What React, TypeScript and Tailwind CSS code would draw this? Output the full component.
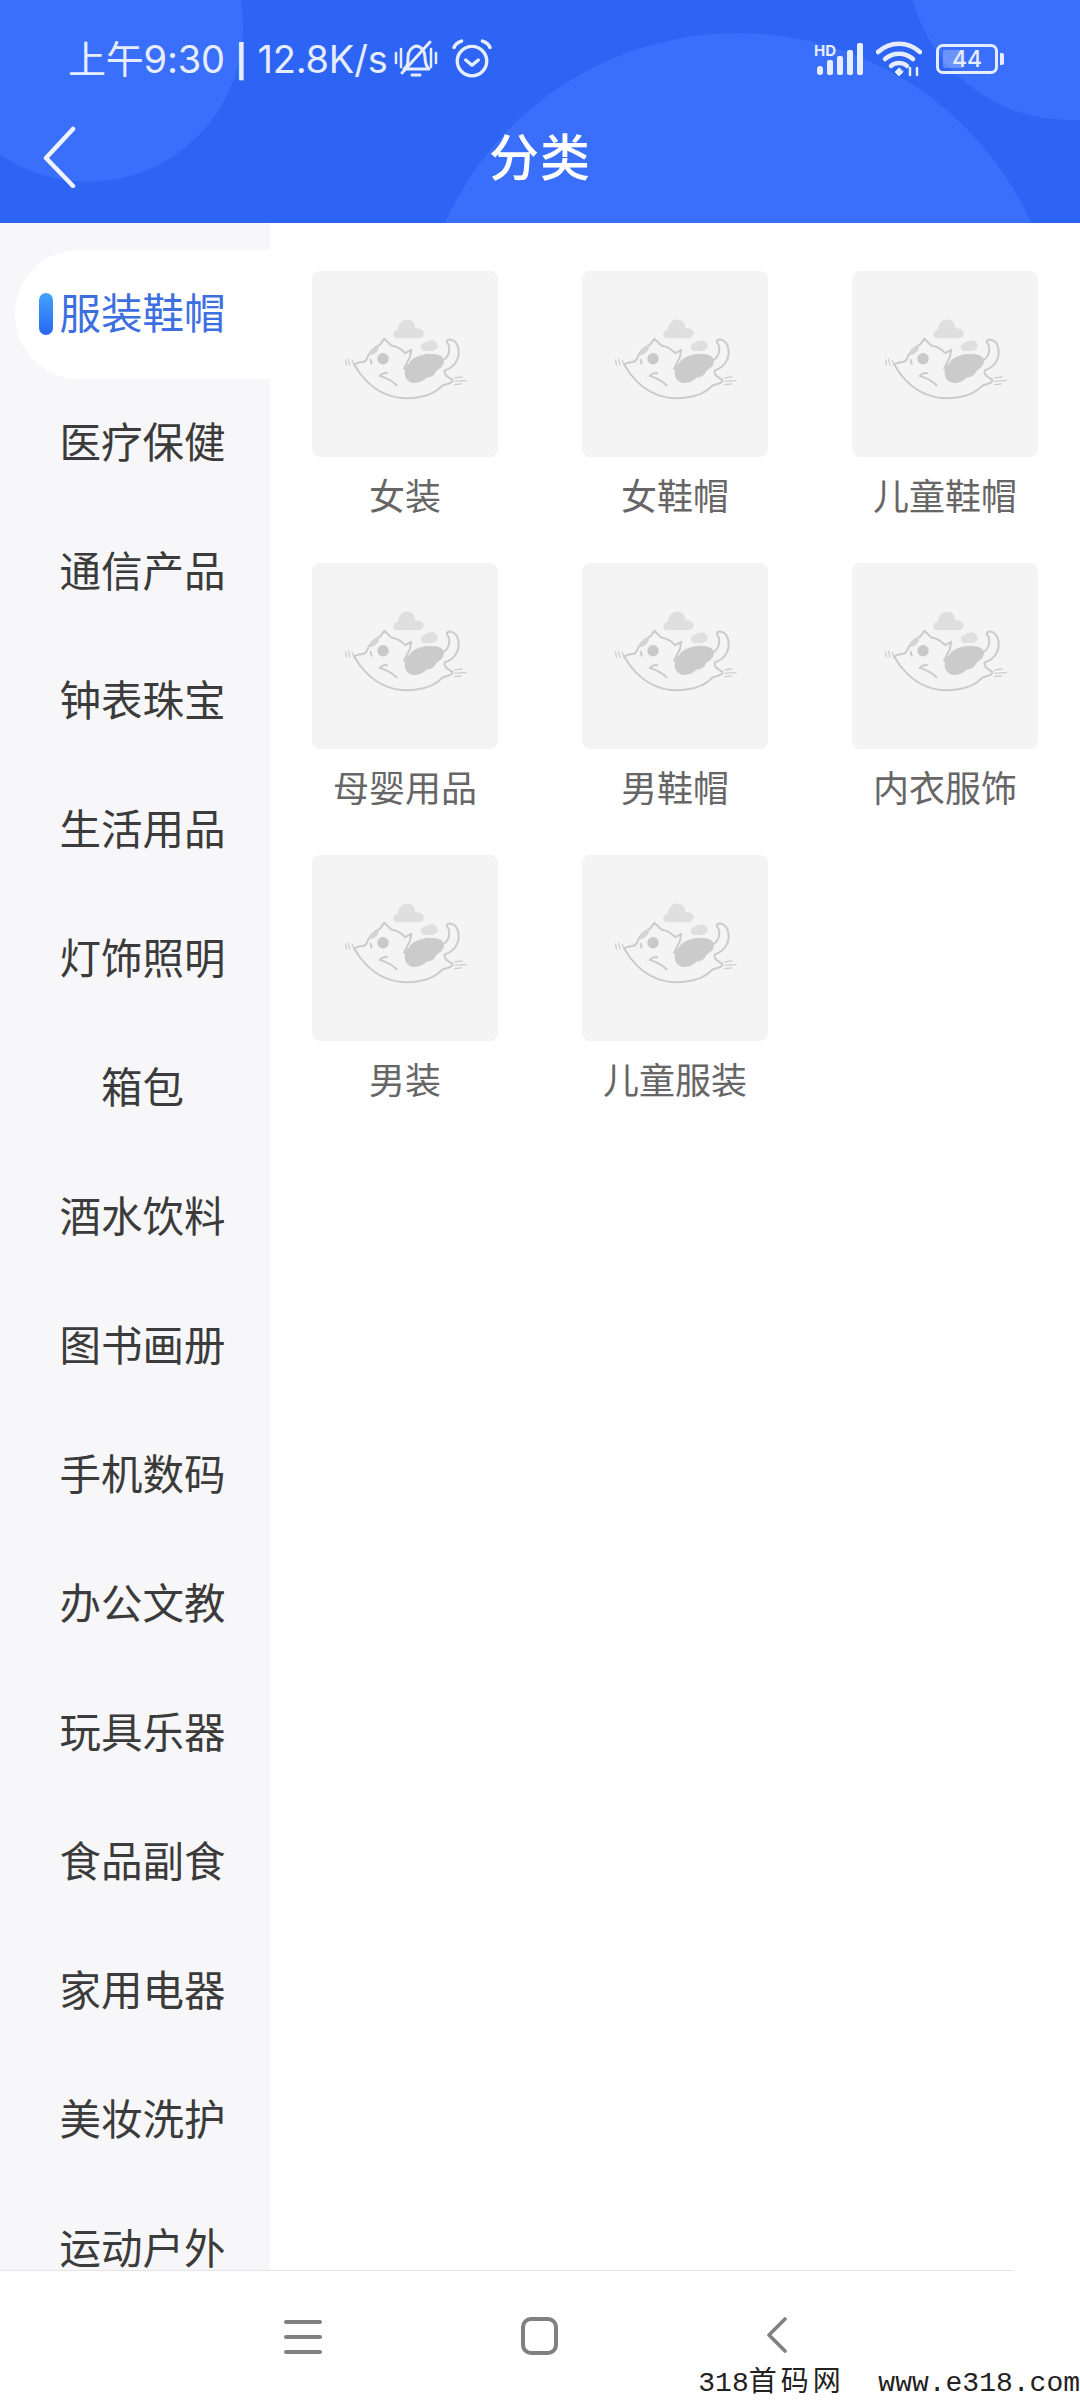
const sans = '[font-family:"Noto_Sans_CJK_SC","Noto_Sans",sans-serif]';

const cats = ["服装鞋帽","医疗保健","通信产品","钟表珠宝","生活用品","灯饰照明","箱包","酒水饮料","图书画册","手机数码","办公文教","玩具乐器","食品副食","家用电器","美妆洗护","运动户外"];
const subs = ["女装","女鞋帽","儿童鞋帽","母婴用品","男鞋帽","内衣服饰","男装","儿童服装"];

function Cat() {
  return (
    <svg viewBox="36 33 555 555" className="w-full h-full" fill="none" stroke="#cbcbcb" strokeWidth="6" strokeLinecap="round" strokeLinejoin="round">
      <path d="M292 234c-18 0-18-24 0-26 2-20 16-32 30-30 16 2 22 14 22 26 18-2 28 8 25 18-2 9-10 12-18 12z" fill="#dfdfdf" stroke="none" />
      <path d="M374 272c-16 0-18-22-2-24 10-12 34-12 38 3 4 13-8 21-20 21z" fill="#dfdfdf" stroke="none" />
      <path d="M162 312c8-8 20-6 28-8 8-2 8-6 12-14 6-18 22-30 38-38l12-17 20 20c16 2 32 12 42 23l18-10-4 22-17 34" />
      <path d="M162 312c16 30 50 72 98 90 50 20 130 12 165-27 10-6 30-4 30-17-12-8-27-14-23-28 38-14 48-46 38-75-10-22-30-20-32-10 14 16 8 46-13 55" />
      <path d="M328 362c-20-12-18-42 0-54 6-16 42-28 66-26 22 0 36 8 34 22-2 16-16 20-22 26-6 14-16 20-30 20-8 12-34 20-48 12z" fill="#cbcbcb" stroke="#cbcbcb" strokeWidth="3" />
      <circle cx="248" cy="295" r="17" fill="#c9c9c9" stroke="none" />
      <path d="M206 284c2-16 14-26 30-30 2 16-10 26-24 30z" fill="#d4d4d4" stroke="none" />
      <path d="M214 310l-3-12" />
      <path d="M238 346c8-8 16-10 22-8M238 346c14 4 36 14 50 28" />
      <path d="M136 298l3 16M145 296l4 18M156 300l5 12" strokeWidth="3.5" />
      <path d="M462 352l22-3M462 362l34-2M462 372l20-2" strokeWidth="3.5" />
    </svg>
  );
}

function Header() {
  return (
    <div className="relative h-[223px] w-full shrink-0 overflow-hidden bg-[#2d64f3] text-white">
      <div className="absolute left-[-67px] top-[-128px] h-[310px] w-[310px] rounded-full bg-[#3a6ffb]" />
      <div className="absolute left-[417px] top-[33px] h-[642px] w-[642px] rounded-full bg-[#3a6ffb]" />
      <div className="absolute left-[907px] top-[-204px] h-[324px] w-[324px] rounded-full bg-[#3a6ffb]" />
      <div className="relative flex h-[116px] items-center pl-[68px] pr-[76px] pt-[2px] text-[#e6edff]">
        <span className="text-[38px] leading-none tracking-[-0.2px] whitespace-nowrap [font-family:Inter,'Noto_Sans_CJK_SC',sans-serif]">
          上午9:30 <span className="text-[32px] font-bold">|</span> 12.8K/s
        </span>
        <svg viewBox="0 0 44 40" className="ml-[6px] h-[40px] w-[44px]" fill="none" stroke="currentColor" strokeWidth="3" strokeLinecap="round" strokeLinejoin="round">
          <path d="M2 14v10M7 10v18M37 10v18M42 14v10" strokeWidth="2.5" />
          <path d="M10 30c4-3 4-6 4-12 0-6 4-10 8-11 5 0 9 5 9 11 0 6 1 9 4 12z" />
          <path d="M8 34L36 3" />
          <path d="M18 36h8" />
        </svg>
        <svg viewBox="0 0 38 38" className="ml-[14px] h-[40px] w-[40px]" fill="none" stroke="currentColor" strokeWidth="3.2" strokeLinecap="round" strokeLinejoin="round">
          <circle cx="19" cy="21" r="14" />
          <path d="M13 20l6 5 6-5" />
          <path d="M2 8c1-3 4-5 7-6M36 8c-1-3-4-5-7-6" strokeWidth="3.4" />
        </svg>
        <div className="ml-auto flex items-center">
          <svg viewBox="0 0 50 34" className="h-[34px] w-[50px]">
            <text x="0" y="14" fontSize="15" fontWeight="700" fontFamily="Inter, sans-serif" fill="currentColor">HD</text>
            <g fill="currentColor">
              <rect x="3" y="24" width="6" height="9" rx="3" />
              <rect x="13" y="18" width="6" height="15" rx="2" />
              <rect x="23" y="14" width="6" height="19" rx="2" />
              <rect x="33" y="8" width="6" height="25" rx="2" />
              <rect x="43" y="1" width="6" height="32" rx="2" />
            </g>
          </svg>
          <svg viewBox="0 0 46 36" className="ml-[12px] h-[36px] w-[46px]" fill="none" stroke="currentColor" strokeWidth="4.5" strokeLinecap="round">
            <path d="M2 11c12-11 30-11 42 0" />
            <path d="M9 18c8-7 20-7 28 0" />
            <path d="M15 25c4-4 12-4 16 0" />
            <path d="M23 27l-4 4 4 4 4-4z" fill="currentColor" strokeWidth="1" />
            <path d="M34 27v7M41 27v7" strokeWidth="2.5" />
          </svg>
          <div className="relative ml-[14px] flex h-[30px] w-[62px] items-center justify-center rounded-[7px] border-[3px] border-[#e6edff]">
            <div className="absolute left-[4px] top-[3px] h-[18px] w-[20px] rounded-[2px] bg-white/25" />
            <span className="relative text-[23px] leading-none font-medium [font-family:Inter,sans-serif]">44</span>
          </div>
          <div className="ml-[2px] h-[12px] w-[4px] rounded-r-[2px] bg-[#e6edff]" />
        </div>
      </div>
      <div className="relative flex h-[107px] items-start justify-center">
        <svg viewBox="0 0 34 62" className="absolute left-[43px] top-[10px] h-[62px] w-[34px]" fill="none" stroke="#eef3ff" strokeWidth="4.5" strokeLinecap="round" strokeLinejoin="round">
          <path d="M30 3L3 32l27 28" />
        </svg>
        <span className={`${sans} mt-[3px] text-[50px] leading-[70px] font-medium tracking-[1px]`}>分类</span>
      </div>
    </div>
  );
}

function Sidebar() {
  return (
    <div className="flex h-full w-[270px] shrink-0 flex-col overflow-hidden bg-[#f7f7f9] pt-[27px]">
      {cats.map((c, i) => (
        <div
          key={c}
          className={
            i === 0
              ? "relative ml-[15px] flex h-[129px] shrink-0 items-center justify-center rounded-l-[64px] bg-white pb-[6px] text-[#3d6fe0]"
              : "relative ml-[15px] flex h-[129px] shrink-0 items-center justify-center pb-[6px] text-[#3b3b3b]"
          }
        >
          {i === 0 && (
            <div className="absolute left-[24px] top-[43px] h-[42px] w-[14px] rounded-full bg-gradient-to-b from-[#45a2ff] to-[#2a66f0]" />
          )}
          <span className={`${sans} text-[41.5px] leading-none whitespace-nowrap`}>{c}</span>
        </div>
      ))}
    </div>
  );
}

function Grid() {
  return (
    <div className="grid flex-1 grid-cols-[270px_270px_270px] content-start pl-[42px] pt-[48px]">
      {subs.map((s) => (
        <div key={s} className="flex h-[292px] w-[186px] flex-col items-center">
          <div className="h-[186px] w-[186px] shrink-0 rounded-[8px] bg-[#f4f4f5]">
            <Cat />
          </div>
          <span className={`${sans} mt-[14px] text-[36px] leading-[46px] text-[#666666] whitespace-nowrap`}>{s}</span>
        </div>
      ))}
    </div>
  );
}

function NavBar() {
  return (
    <div className="relative h-[130px] w-full shrink-0 bg-white">
      <div className="h-px w-[1014px] bg-[#e6e6e6]" />
      <div className="absolute left-[284px] top-[50px] flex h-[34px] w-[38px] flex-col justify-between">
        <div className="h-[4px] rounded-full bg-[#808080]" />
        <div className="h-[4px] rounded-full bg-[#808080]" />
        <div className="h-[4px] rounded-full bg-[#808080]" />
      </div>
      <div className="absolute left-[521px] top-[47px] h-[38px] w-[37px] rounded-[10px] border-[4px] border-[#808080]" />
      <svg viewBox="0 0 22 36" className="absolute left-[766px] top-[47px] h-[36px] w-[22px]" fill="none" stroke="#808080" strokeWidth="3.6" strokeLinecap="round" strokeLinejoin="round">
        <path d="M19 2L3 18l16 16" />
      </svg>
      <span className="absolute right-0 bottom-[2px] text-[28px] leading-[28px] whitespace-pre text-[#222222] [font-family:'Liberation_Mono','Noto_Sans_CJK_SC',monospace]">
        318<span className="tracking-[4px]">首码网</span>  www.e318.com
      </span>
    </div>
  );
}

export default function App() {
  return (
    <div className="flex h-[2400px] w-[1080px] flex-col overflow-hidden bg-white">
      <Header />
      <div className="flex h-[2047px] w-full shrink-0">
        <Sidebar />
        <Grid />
      </div>
      <NavBar />
    </div>
  );
}
